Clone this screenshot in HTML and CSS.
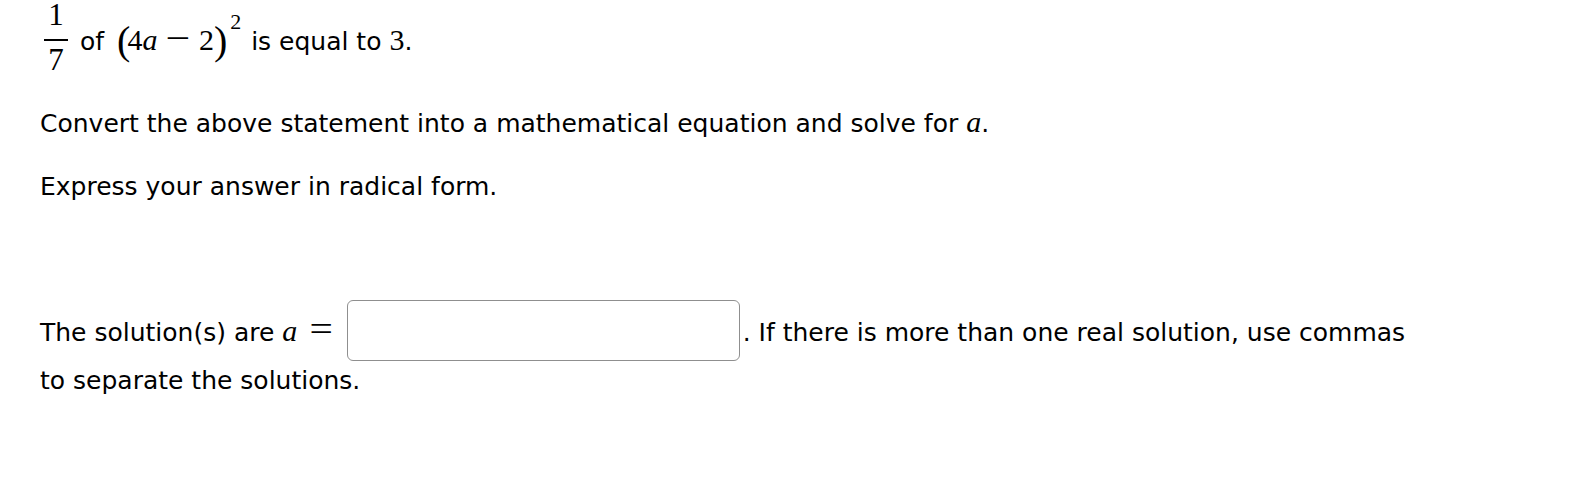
FILE: index.html
```html
<!DOCTYPE html>
<html>
<head>
<meta charset="utf-8">
<link rel="stylesheet" href="styles.css">
</head>
<body>
<div class="page">
  <p class="line first"><span class="frac"><span class="num">1</span><span class="bar"></span><span class="den">7</span></span><span class="sp1"></span>of<span class="sp2"></span><span class="m"><span class="paren open">(</span>4<i>a</i><span class="op">−</span>2<span class="paren">)</span><sup>2</sup></span> is equal to <span class="m">3</span>.</p>
  <p class="line second">Convert the above statement into a mathematical equation and solve for <span class="m"><i>a</i></span>.</p>
  <p class="line third">Express your answer in radical form.</p>
  <p class="line answer">The solution(s) are <span class="m"><i>a</i><span class="rel">=</span></span><span class="box"></span>. If there is more than one real solution, use commas<br>to separate the solutions.</p>
</div>
</body>
</html>
```
FILE: styles.css
```css
html, body { margin: 0; padding: 0; background: #fff; }
body { font-family: "DejaVu Sans", Verdana, sans-serif; color: #000; }
.page { padding: 0 0 0 40px; font-size: 25px; }
.line { margin: 0; line-height: 30px; }

.first { height: 75px; }
.frac { display: inline-block; vertical-align: -20px; font-family: "Liberation Serif", serif; font-size: 31px; text-align: center; width: 24px; margin-left: 4px; }
.num, .den { display: block; line-height: 30px; }
.num { margin-bottom: 9px; }
.bar { display: block; height: 1.5px; background: #000; margin-bottom: 4.5px; }
.sp1 { display: inline-block; width: 12px; }
.sp2 { display: inline-block; width: 13px; }

.m { font-family: "Liberation Serif", serif; font-size: 30px; }
.m i { font-style: italic; }
.paren { font-size: 40px; vertical-align: -4px; line-height: 0; }
.paren.open { margin-right: -3px; }
.op { display: inline-block; font-size: 38px; line-height: 0; vertical-align: -1px; margin: 0 10px; transform: scaleX(1.15); }
.m sup { font-size: 22px; vertical-align: 0; position: relative; top: -21px; margin: 0 2px 0 3px; line-height: 0; }
.rel { display: inline-block; font-size: 36px; line-height: 0; margin: 0 15px 0 14px; transform: scaleX(1.15); }

.second { margin-top: 32px; }
.third { margin-top: 33px; }

.answer { margin-top: 105px; line-height: 48px; }
.box { display: inline-block; vertical-align: -13px; width: 393px; height: 61px; margin: -7px 3px -7px 0; border: 1.5px solid #8f8f8f; border-radius: 6px; box-sizing: border-box; }
```
